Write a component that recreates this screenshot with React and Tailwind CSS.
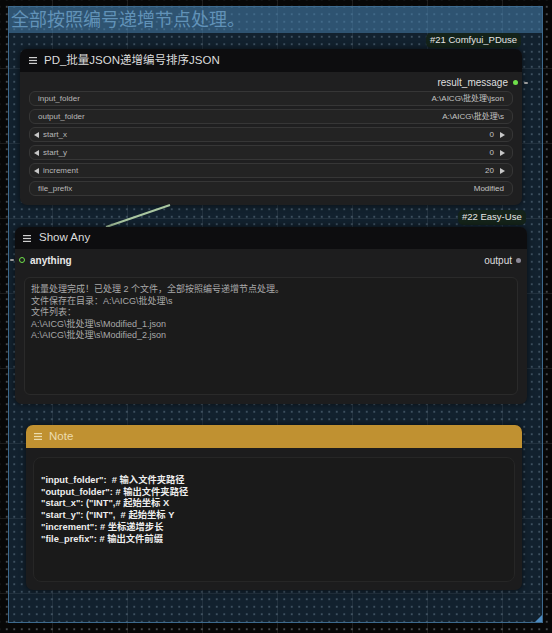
import React from 'react';

const font = "font-['Liberation_Sans','Noto_Sans_CJK_SC',sans-serif]";

const Hamburger = ({ className = '' }) => (
    <svg width="8" height="7" viewBox="0 0 8 7" className={className}>
        <rect x="0" y="0" width="8" height="1.2" fill="currentColor" />
        <rect x="0" y="2.9" width="8" height="1.2" fill="currentColor" />
        <rect x="0" y="5.8" width="8" height="1.2" fill="currentColor" />
    </svg>
);

const Arrow = ({ dir }) => (
    <svg width="5" height="6" viewBox="0 0 5 6" className="shrink-0 text-[#c8c8c8]">
        {dir === 'left' ? <polygon points="5,0 5,6 0,3" fill="currentColor" /> : <polygon points="0,0 0,6 5,3" fill="currentColor" />}
    </svg>
);

const Widget = ({ label, value, arrows }) => (
    <div className={`flex h-[15px] items-center rounded-[6px] border border-[#363636] bg-[#232323] text-[8px] leading-none ${arrows ? 'pl-[4px] pr-[7px]' : 'pl-[8px] pr-[8px]'}`}>
        {arrows && <Arrow dir="left" />}
        <span className={`text-[#b8b8b8] ${arrows ? 'ml-[4px]' : ''}`}>{label}</span>
        <span className="ml-auto text-[#c4c4c4]">{value}</span>
        {arrows && <span className="ml-[6px]"><Arrow dir="right" /></span>}
    </div>
);

const Badge = ({ children, className }) => (
    <div className={`absolute flex h-[15px] items-center rounded-[5px] bg-[#14231a] px-[4px] text-[9.5px] text-[#e6e6e6] ${className}`}>
        {children}
    </div>
);

const showText = `批量处理完成！已处理 2 个文件，全部按照编号递增节点处理。
文件保存在目录：A:\\AICG\\批处理\\s
文件列表：
A:\\AICG\\批处理\\s\\Modified_1.json
A:\\AICG\\批处理\\s\\Modified_2.json`;

const noteText = `"input_folder":  # 输入文件夹路径
"output_folder": # 输出文件夹路径
"start_x": ("INT",# 起始坐标 X
"start_y": ("INT",  # 起始坐标 Y
"increment": # 坐标递增步长
"file_prefix": # 输出文件前缀`;

const App = () => {
    return (
        <div className={`relative h-[633px] w-[552px] overflow-hidden bg-[#070707] ${font} bg-[image:linear-gradient(to_right,rgba(255,255,255,0.09)_1px,transparent_1px),linear-gradient(to_bottom,rgba(255,255,255,0.09)_1px,transparent_1px),radial-gradient(circle,rgba(170,180,190,0.38)_0.9px,transparent_1.2px)] bg-[size:75px_75px,75px_75px,7.5px_7.5px] bg-[position:52px_0,0_68px,3px_3px]`}>
            {/* Group */}
            <div className="absolute left-[8px] top-[6px] flex h-[617px] w-[535px] flex-col border border-[#3d6a8e] bg-[rgba(45,95,140,0.3)]">
                <div className="flex h-[26px] items-center bg-[rgba(70,125,170,0.55)] pl-[2px] text-[18px] leading-none text-[#6192b8]">
                    全部按照编号递增节点处理。
                </div>
                <div className="flex-1" />
                <div className="absolute bottom-0 right-0 h-0 w-0 border-b-[7px] border-l-[7px] border-b-[#4d8cc2] border-l-transparent" />
            </div>

            {/* Node #21 */}
            <Badge className="left-[426px] top-[33px]">#21 Comfyui_PDuse</Badge>
            <div className="absolute left-[20px] top-[49px] flex w-[502px] flex-col overflow-visible rounded-[7px] bg-[#1f1f20] shadow-[0_0_6px_rgba(0,0,0,0.6)]">
                <div className="flex h-[23px] items-center gap-[7px] rounded-t-[7px] bg-[#0d0d0f] pl-[9px] text-[11.5px] text-[#dcdcdc]">
                    <Hamburger className="text-[#cfcfcf]" />
                    <span>PD_批量JSON递增编号排序JSON</span>
                </div>
                <div className="relative flex h-[15px] items-center justify-end pr-[14px] text-[10px] text-[#dedede]">
                    <span className="mt-[6px]">result_message</span>
                    <span className="absolute right-[4.5px] top-[8px] h-[5px] w-[5px] rounded-full bg-[#6fe04a]" />
                    <span className="absolute right-[-6px] top-[9.5px] h-[2px] w-[4px] rounded-full bg-[#9a9a9a]" />
                </div>
                <div className="flex flex-col gap-[3px] px-[9px] pb-[9px] pt-[4px]">
                    <Widget label="input_folder" value="A:\AICG\批处理\json" />
                    <Widget label="output_folder" value="A:\AICG\批处理\s" />
                    <Widget label="start_x" value="0" arrows />
                    <Widget label="start_y" value="0" arrows />
                    <Widget label="increment" value="20" arrows />
                    <Widget label="file_prefix" value="Modified" />
                </div>
            </div>

            {/* link */}
            <svg className="absolute left-0 top-0" width="552" height="633">
                <path d="M106 227 L170 205" stroke="#a9c6a0" strokeWidth="2" fill="none" />
            </svg>

            {/* Node #22 */}
            <Badge className="left-[458px] top-[210px]">#22 Easy-Use</Badge>
            <div className="absolute left-[15px] top-[227px] flex h-[177px] w-[512px] flex-col rounded-[7px] bg-[#1d1d1e] shadow-[0_0_6px_rgba(0,0,0,0.6)]">
                <div className="flex h-[22px] items-center gap-[8px] rounded-t-[7px] bg-[#0d0d0f] pl-[8px] text-[11.5px] text-[#dcdcdc]">
                    <Hamburger className="text-[#cfcfcf]" />
                    <span>Show Any</span>
                </div>
                <div className="relative flex h-[22px] items-center pl-[15px] pr-[15px] text-[10px]">
                    <span className="absolute left-[-5px] top-[10px] h-[2px] w-[4px] rounded-full bg-[#9a9a9a]" />
                    <span className="absolute left-[4px] top-[8px] h-[6px] w-[6px] rounded-full border-[1.6px] border-[#6fe04a]" />
                    <span className="font-bold text-[#e8e8e8]">anything</span>
                    <span className="ml-auto text-[#dedede]">output</span>
                    <span className="absolute right-[6px] top-[9px] h-[5px] w-[5px] rounded-full bg-[#8b8896]" />
                </div>
                <div className="mx-[9px] mb-[9px] mt-[6px] flex-1 rounded-[6px] border border-[#2a2a2a] bg-[#1b1b1b] px-[6px] pt-[6px]">
                    <pre className={`whitespace-pre text-[9px] leading-[11.6px] text-[#a9a9a9] ${font}`}>{showText}</pre>
                </div>
            </div>

            {/* Note */}
            <div className="absolute left-[26px] top-[425px] flex h-[165px] w-[496px] flex-col rounded-[7px] bg-[#1c1c1d] shadow-[0_0_6px_rgba(0,0,0,0.6)]">
                <div className="flex h-[23px] items-center gap-[7px] rounded-t-[7px] bg-[#c09131] pl-[8px] text-[11.5px] text-[#ecdcae]">
                    <Hamburger className="text-[#ecdcae]" />
                    <span>Note</span>
                </div>
                <div className="mx-[7px] mb-[8px] mt-[9px] flex-1 rounded-[8px] border border-[#262626] bg-[#1a1a1a] px-[7px] pt-[17px]">
                    <pre className={`whitespace-pre text-[9.3px] font-semibold leading-[11.7px] text-[#eeeeee] ${font}`}>{noteText}</pre>
                </div>
            </div>
        </div>
    );
};

export default App;
